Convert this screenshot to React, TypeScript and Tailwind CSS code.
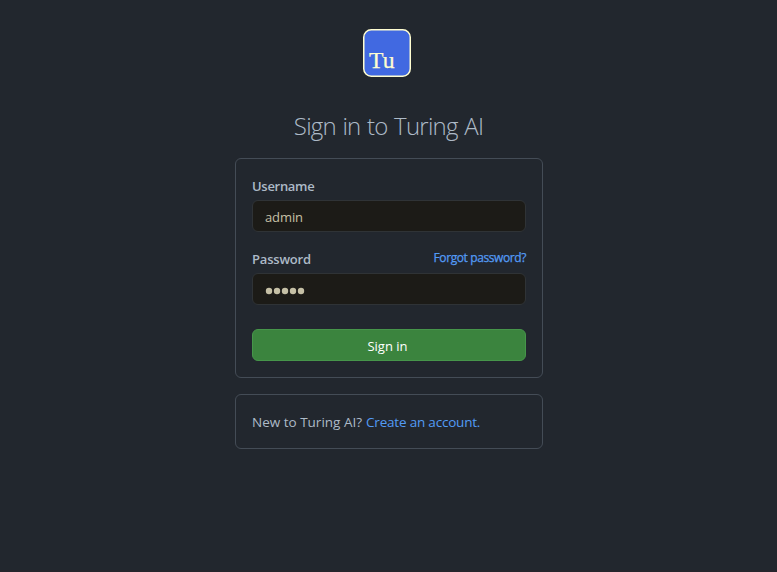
import React from "react";

const field =
  "h-8 w-full rounded-md border border-[#2f3336] bg-[#1c1b17] pl-3 pr-3 text-[#c5c0a6] outline-none";

function Logo() {
  return (
    <svg width="48" height="48" viewBox="0 0 48 48" className="block">
      <rect x="0.75" y="0.75" width="46.5" height="46.5" rx="7.5" fill="#4169e1" stroke="#fffdd0" strokeWidth="1.5" />
      <text x="6" y="39" fontSize="24" textLength="25.5" lengthAdjust="spacingAndGlyphs" fill="#fffdd0" stroke="#fffdd0" strokeWidth="0.25" className="font-['Liberation_Serif',serif]">
        Tu
      </text>
    </svg>
  );
}

export default function App() {
  return (
    <div className="flex h-[572px] flex-col items-center border-b-2 border-[#25252c] bg-[#22272e] font-['Open_Sans','Noto_Sans',sans-serif] text-sm text-[#adbac7]">
      <div className="ml-[-3px] pt-[29px]">
        <Logo />
      </div>
      <h1 className="mt-[31px] h-9 text-2xl leading-9 font-light tracking-[-0.75px] [word-spacing:1px] whitespace-nowrap">Sign in to Turing AI</h1>
      <form className="mt-[14px] ml-px h-[220px] w-[308px] rounded-md border border-[#444c56] px-4 pt-[17px]" onSubmit={(e) => e.preventDefault()}>
        <label htmlFor="username" className="block h-[24px] text-[13px] leading-[21px] font-semibold tracking-[-0.3px]">Username</label>
        <input id="username" defaultValue="admin" className={field + " pt-0.5 text-[13px] tracking-[-0.1px]"} />
        <div className="mt-4 flex h-[25px] items-start justify-between">
          <label htmlFor="password" className="text-[13px] leading-[23px] font-semibold tracking-[-0.2px]">Password</label>
          <a href="#" className="text-[12px] leading-[20px] font-medium tracking-[-0.4px] text-[#539bf5] [-webkit-text-stroke:0.25px]">Forgot password?</a>
        </div>
        <div id="password" className={field + " flex items-center pt-1"}>
          <svg width="40" height="8" viewBox="0 0 40 8" fill="currentColor">
            {[4, 12, 20, 28, 36].map((x) => (
              <circle key={x} cx={x} cy="4" r="3.2" />
            ))}
          </svg>
        </div>
        <button className="mt-6 block h-8 w-full rounded-md border border-[#46954a] bg-[#3b843e] pr-[3px] text-[13px] leading-8 text-white">Sign in</button>
      </form>
      <div className="mt-4 ml-px flex h-[55px] w-[308px] items-center gap-1 rounded-md border border-[#444c56] px-4 pt-0.5 text-[13.5px] whitespace-nowrap">
        <span>New to Turing AI?</span>
        <a href="#" className="tracking-[-0.2px] text-[#539bf5]">Create an account.</a>
      </div>
    </div>
  );
}
